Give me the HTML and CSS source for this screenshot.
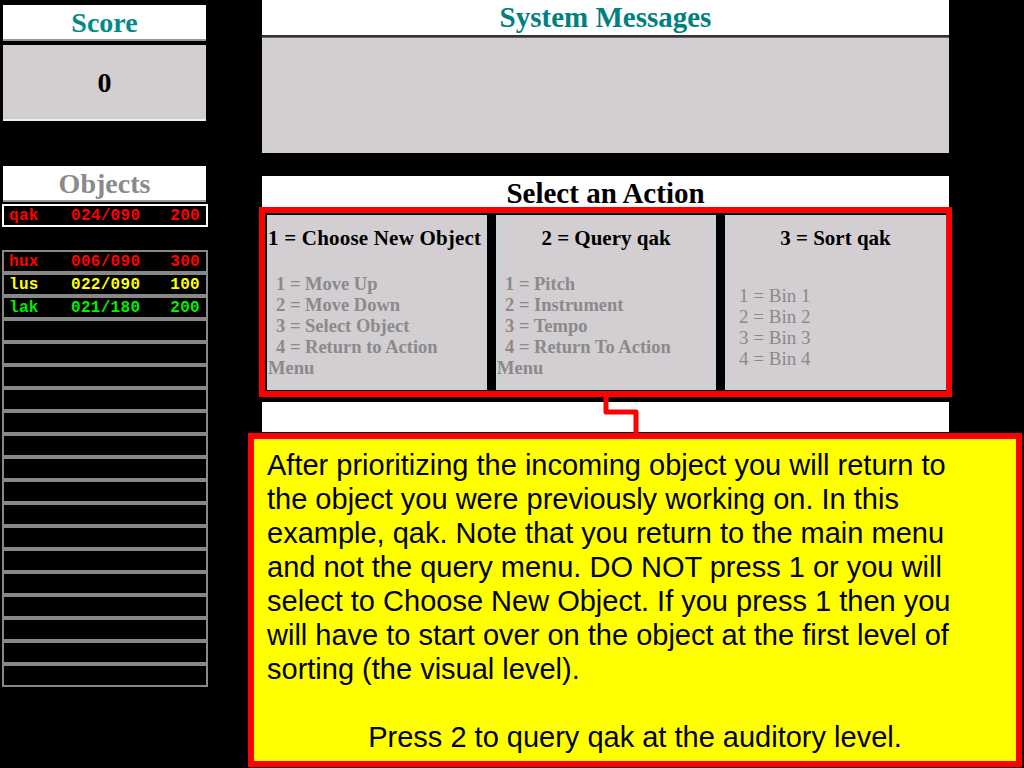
FILE: index.html
```html
<!DOCTYPE html>
<html>
<head>
<meta charset="utf-8">
<link rel="stylesheet" href="styles.css">
</head>
<body>
<div class="page">
  <div class="left">
    <div class="title-box score-title">Score</div>
    <div class="score-val">0</div>
    <div class="title-box objects-title">Objects</div>
    <div class="obj-row current red"><span>qak</span><span>024/090</span><span class="pts">200</span></div>
    <div class="obj-list">
      <div class="obj-row red"><span>hux</span><span>006/090</span><span class="pts">300</span></div>
      <div class="obj-row yellow"><span>lus</span><span>022/090</span><span class="pts">100</span></div>
      <div class="obj-row green"><span>lak</span><span>021/180</span><span class="pts">200</span></div>
      <div class="obj-row"></div>
      <div class="obj-row"></div>
      <div class="obj-row"></div>
      <div class="obj-row"></div>
      <div class="obj-row"></div>
      <div class="obj-row"></div>
      <div class="obj-row"></div>
      <div class="obj-row"></div>
      <div class="obj-row"></div>
      <div class="obj-row"></div>
      <div class="obj-row"></div>
      <div class="obj-row"></div>
      <div class="obj-row"></div>
      <div class="obj-row"></div>
      <div class="obj-row"></div>
      <div class="obj-row"></div>
    </div>
  </div>
  <div class="right">
    <div class="sys-title">System Messages</div>
    <div class="sys-body"></div>
    <div class="action-title">Select an Action</div>
    <div class="action-box">
      <div class="panel">
        <div class="panel-head">1 = Choose New Object</div>
        <div class="panel-items">
          <div>1 = Move Up</div>
          <div>2 = Move Down</div>
          <div>3 = Select Object</div>
          <div>4 = Return to Action Menu</div>
        </div>
      </div>
      <div class="panel">
        <div class="panel-head">2 = Query qak</div>
        <div class="panel-items">
          <div>1 = Pitch</div>
          <div>2 = Instrument</div>
          <div>3 = Tempo</div>
          <div>4 = Return To Action Menu</div>
        </div>
      </div>
      <div class="panel">
        <div class="panel-head">3 = Sort qak</div>
        <div class="panel-items bins">
          <div>1 = Bin 1</div>
          <div>2 = Bin 2</div>
          <div>3 = Bin 3</div>
          <div>4 = Bin 4</div>
        </div>
      </div>
    </div>
    <div class="input-box"></div>
  </div>
</div>
<svg class="connector" width="60" height="50" viewBox="0 0 60 50">
  <polyline points="5,0 5,15 35,15 35,50" fill="none" stroke="#ff0000" stroke-width="5" stroke-linejoin="round"/>
</svg>
<div class="callout">
  <p>After prioritizing the incoming object you will return to the object you were previously working on. In this example, qak. Note that you return to the main menu and not the query menu. DO NOT press 1 or you will select to Choose New Object. If you press 1 then you will have to start over on the object at the first level of sorting (the visual level).</p>
  <p class="center">Press 2 to query qak at the auditory level.</p>
</div>
</body>
</html>
```

FILE: styles.css
```css
html, body {
  margin: 0;
  padding: 0;
  background: #000;
  width: 1024px;
  height: 768px;
  overflow: hidden;
}
.page {
  display: flex;
  align-items: flex-start;
}
.left {
  width: 206px;
  margin-left: 2px;
  display: flex;
  flex-direction: column;
}
.title-box {
  background: #fff;
  margin-left: 1px;
  width: 203px;
  font-family: "Liberation Serif", serif;
  font-weight: bold;
  font-size: 28px;
  text-align: center;
  box-sizing: border-box;
  border-bottom: 2px solid #999;
}
.score-title {
  margin-top: 5px;
  height: 36px;
  line-height: 36px;
  color: #008b8b;
}
.score-val {
  margin-top: 4px;
  margin-left: 1px;
  width: 203px;
  height: 76px;
  box-sizing: border-box;
  background: #d2ced2;
  border-bottom: 2px solid #eee;
  font-family: "Liberation Serif", serif;
  font-weight: bold;
  font-size: 28px;
  line-height: 76px;
  text-align: center;
  color: #000;
}
.objects-title {
  margin-top: 45px;
  height: 36px;
  line-height: 36px;
  color: #8a8a8a;
}
.obj-row {
  height: 23px;
  box-sizing: border-box;
  border: 2px solid #888;
  background: #000;
  display: grid;
  grid-template-columns: 62px 1fr 40px;
  padding: 0 6px 0 5px;
  align-items: center;
  font-family: "Liberation Mono", monospace;
  font-weight: bold;
  font-size: 16px;
  line-height: 18px;
  letter-spacing: 0.3px;
}
.obj-row .pts { text-align: right; }
.obj-row.current {
  margin-top: 2px;
  border-color: #fff;
}
.obj-list {
  margin-top: 23px;
}
.red { color: #ff0000; }
.yellow { color: #ffff00; }
.green { color: #00ee00; }

.right {
  margin-left: 51px;
  width: 693px;
  display: flex;
  flex-direction: column;
  align-items: center;
}
.sys-title {
  width: 687px;
  height: 37px;
  box-sizing: border-box;
  background: #fff;
  border-bottom: 2px solid #333;
  font-family: "Liberation Serif", serif;
  font-weight: bold;
  font-size: 29px;
  line-height: 35px;
  text-align: center;
  color: #008080;
}
.sys-body {
  width: 687px;
  height: 116px;
  box-sizing: border-box;
  background: #d2ced2;
  border-top: 1px solid #666;
}
.action-title {
  margin-top: 23px;
  width: 687px;
  height: 31px;
  background: #fff;
  font-family: "Liberation Serif", serif;
  font-weight: bold;
  font-size: 29px;
  line-height: 34px;
  text-align: center;
  color: #000;
}
.action-box {
  width: 693px;
  height: 190px;
  box-sizing: border-box;
  border: 6px solid #ff0000;
  background: #000;
  display: flex;
  gap: 9px;
  padding: 2px 0 1px 2px;
}
.panel {
  width: 220px;
  background: #d2ced2;
  border: 1px solid #bcd8e0;
  box-sizing: border-box;
  font-family: "Liberation Serif", serif;
  font-weight: bold;
}
.panel:last-child { width: 221px; }
.panel-head {
  font-size: 21px;
  text-align: center;
  color: #000;
  margin-top: 10px;
  line-height: 24px;
  white-space: nowrap;
}
.panel:first-child .panel-head {
  text-align: left;
  letter-spacing: 0.2px;
}
.panel-items {
  margin-top: 24px;
  font-size: 18.5px;
  line-height: 21px;
  color: #8a8a8a;
  padding-right: 16px;
}
.panel-items div {
  text-indent: 8px;
}
.panel-items.bins {
  margin-top: 35px;
  padding-left: 13px;
  font-weight: normal;
  font-size: 19px;
}
.panel-items.bins div { text-indent: 0; }
.input-box {
  margin-top: 5px;
  width: 687px;
  height: 30px;
  background: #fff;
}
.connector {
  position: absolute;
  left: 601px;
  top: 397px;
}
.callout {
  position: absolute;
  left: 248px;
  top: 433px;
  width: 774px;
  height: 334px;
  box-sizing: border-box;
  border: 6px solid #ff0000;
  background: #ffff00;
  padding: 9px 44px 9px 13px;
  font-family: "Liberation Sans", Arial, sans-serif;
  font-size: 29px;
  line-height: 34px;
  color: #000;
}
.callout p {
  margin: 0;
}
.callout p.center {
  margin-top: 34px;
  margin-right: -31px;
  text-align: center;
  font-size: 29px;
}
```
